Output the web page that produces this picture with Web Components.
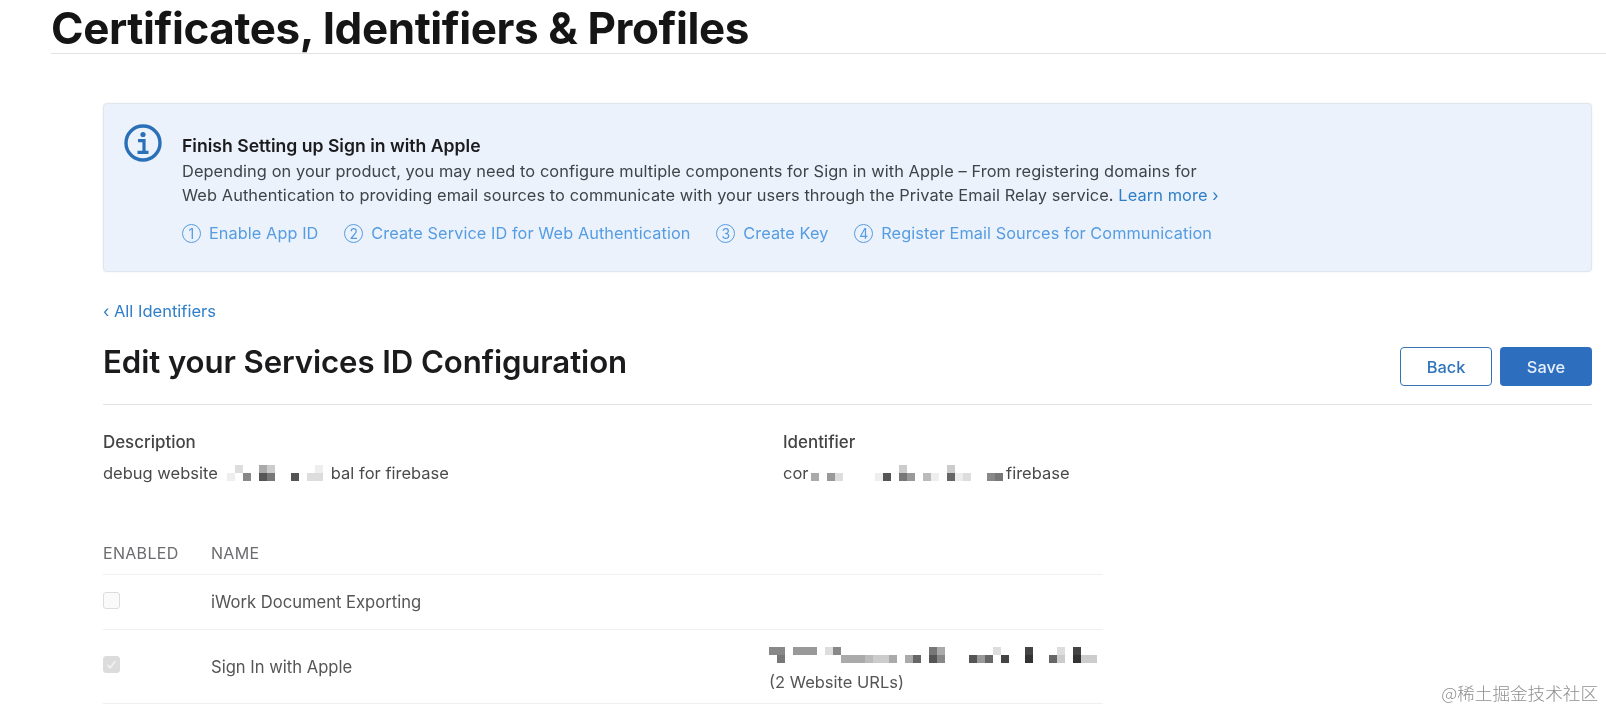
<!DOCTYPE html>
<html lang="en">
<head>
<meta charset="utf-8">
<title>Certificates, Identifiers &amp; Profiles</title>
<style>
  html, body { margin: 0; height: 712px; overflow: hidden; background: #fff; }
  body { font-family: Inter, "Liberation Sans", sans-serif; color: #333; position: relative; }
</style>
</head>
<body>
<page-title>Certificates, Identifiers &amp; Profiles</page-title>

<page-main>
  <info-banner heading="Finish Setting up Sign in with Apple">
    Depending on your product, you may need to configure multiple components for Sign in with Apple – From registering domains for<br>
    Web Authentication to providing email sources to communicate with your users through the Private Email Relay service. <a slot="more">Learn more ›</a>
    <step-link slot="steps" num="1">Enable App ID</step-link>
    <step-link slot="steps" num="2">Create Service ID for Web Authentication</step-link>
    <step-link slot="steps" num="3">Create Key</step-link>
    <step-link slot="steps" num="4">Register Email Sources for Communication</step-link>
  </info-banner>

  <back-link>All Identifiers</back-link>

  <section-head heading="Edit your Services ID Configuration">
    <app-button kind="outline">Back</app-button>
    <app-button kind="solid">Save</app-button>
  </section-head>

  <detail-grid>
    <detail-field label="Description">
      <span>debug website</span><mosaic-blur style="margin:0 8px 0 9px" cols="12"
        row0="1:ddd 4:aaa 5:ccc 11:eee"
        row1="0:eee 2:888 4:555 5:777 8:555 10:ddd 11:ddd"></mosaic-blur><span>bal for firebase</span>
    </detail-field>
    <detail-field label="Identifier">
      <span>cor</span><mosaic-blur style="margin:0 3.5px 0 2px" cols="24"
        row0="11:ccc 17:ccc"
        row1="0:aaa 2:999 3:ddd 8:eee 9:555 11:777 12:999 14:bbb 15:eee 17:666 18:eee 19:ddd 22:888 23:777"></mosaic-blur><span>firebase</span>
    </detail-field>
  </detail-grid>

  <service-table>
    <service-row name="iWork Document Exporting"></service-row>
    <service-row name="Sign In with Apple" checked tall>
      <mosaic-blur cols="41"
        row0="0:888 1:888 3:999 4:999 5:999 7:ddd 8:888 20:777 21:aaa 28:ddd 32:444 36:ddd 38:444"
        row1="1:777 9:aaa 10:aaa 11:aaa 12:bbb 13:ccc 14:ccc 15:aaa 17:aaa 18:666 20:555 21:888 25:555 26:999 27:666 29:444 32:333 35:666 36:ccc 38:333 39:ccc 40:ccc"></mosaic-blur>
      <div class="urls" style="margin-top:8px">(2 Website URLs)</div>
    </service-row>
  </service-table>
</page-main>

<water-mark>@稀土掘金技术社区</water-mark>

<script>
  // Small helper so each component only has to say what is in its shadow root
  class ShadowElement extends HTMLElement {
    constructor(html) {
      super();
      this.attachShadow({ mode: 'open' });
      this.shadowRoot.innerHTML = html;
    }
  }

  class PageTitle extends ShadowElement {
    constructor() {
      super(`
        <style>
          :host { display: block; margin-left: 51px; height: 53px; border-bottom: 1px solid #e3e3e3; filter: blur(.35px); }
          h1 { margin: 0; padding-top: 4px; font: 700 44px/49px Inter, "Liberation Sans", sans-serif; color: #151515; letter-spacing: -.42px; }
        </style>
        <h1><slot></slot></h1>`);
    }
  }
  customElements.define('page-title', PageTitle);

  class PageMain extends ShadowElement {
    constructor() {
      super(`
        <style>
          :host { display: block; margin: 49px 14px 0 103px; filter: blur(.35px); }
        </style>
        <slot></slot>`);
    }
  }
  customElements.define('page-main', PageMain);

  class InfoBanner extends ShadowElement {
    constructor() {
      super(`
        <style>
          :host {
            display: flex; box-sizing: border-box; height: 169px; padding: 20px 0 0 20px; gap: 20px;
            background: #ebf2fb; border: 1px solid #dfe6ee; border-radius: 4px;
            box-shadow: 0 0 2px rgba(0,0,0,.08);
          }
          svg { width: 38px; height: 38px; flex: none; }
          .text { font-size: 16.38px; line-height: 23.5px; color: #3f4448; padding-top: 10px; letter-spacing: .08px; white-space: nowrap; }
          h3 { margin: 0 0 2px; font-size: 17.6px; font-weight: 600; line-height: 24px; color: #1b1b1d; letter-spacing: 0; }
          ::slotted(a) { color: #2f7ec8; }
          .steps { display: flex; gap: 25.8px; margin-top: 15px; }
        </style>
        <svg viewBox="0 0 38 38" fill="none" stroke="#2a70b9">
          <circle cx="19" cy="19" r="17" stroke-width="3.4"/>
          <circle cx="19" cy="10.5" r="2.6" fill="#2a70b9" stroke="none"/>
          <path d="M14 16.6h6v11.4M13.5 28.4h11" stroke-width="3.2"/>
        </svg>
        <div class="text">
          <h3></h3>
          <slot></slot><slot name="more"></slot>
          <div class="steps"><slot name="steps"></slot></div>
        </div>`);
      this.shadowRoot.querySelector('h3').textContent = this.getAttribute('heading');
    }
  }
  customElements.define('info-banner', InfoBanner);

  class StepLink extends ShadowElement {
    constructor() {
      super(`
        <style>
          :host { display: inline-flex; align-items: center; gap: 8px; color: #569ce2; font-size: 16.3px; line-height: 23px; letter-spacing: .08px; }
          b {
            box-sizing: border-box; width: 19px; height: 19px; border: 1.3px solid #569ce2; border-radius: 50%;
            display: flex; align-items: center; justify-content: center;
            font-size: 14px; font-weight: 400; line-height: 1;
          }
        </style>
        <b></b><span><slot></slot></span>`);
      this.shadowRoot.querySelector('b').textContent = this.getAttribute('num');
    }
  }
  customElements.define('step-link', StepLink);

  class BackLink extends ShadowElement {
    constructor() {
      super(`
        <style>
          :host { display: block; margin-top: 27px; color: #2f7ec8; font-size: 16.5px; line-height: 24px; }
        </style>
        ‹ <slot></slot>`);
    }
  }
  customElements.define('back-link', BackLink);

  class SectionHead extends ShadowElement {
    constructor() {
      super(`
        <style>
          :host {
            display: flex; justify-content: space-between; align-items: flex-start; box-sizing: border-box;
            height: 70px; margin-top: 12px; padding-top: 9px; border-bottom: 1px solid #e3e3e3;
          }
          h2 { margin: 0; font-size: 31.2px; font-weight: 600; line-height: 36px; color: #1b1b1d; letter-spacing: -.1px; }
          .actions { display: flex; gap: 8px; margin-top: 3px; }
        </style>
        <h2></h2>
        <div class="actions"><slot></slot></div>`);
      this.shadowRoot.querySelector('h2').textContent = this.getAttribute('heading');
    }
  }
  customElements.define('section-head', SectionHead);

  class AppButton extends ShadowElement {
    constructor() {
      super(`
        <style>
          :host {
            display: flex; align-items: center; justify-content: center; box-sizing: border-box;
            width: 92px; height: 39px; border-radius: 4px; font-size: 16.4px; font-weight: 500;
          }
          :host([kind=outline]) { background: #fff; color: #2f74bb; border: 1.5px solid #3574b0; }
          :host([kind=solid]) { background: #2d6ebf; color: #e6effa; }
        </style>
        <slot></slot>`);
    }
  }
  customElements.define('app-button', AppButton);

  class DetailGrid extends ShadowElement {
    constructor() {
      super(`
        <style>
          :host { display: grid; grid-template-columns: 680px 1fr; margin-top: 25px; }
        </style>
        <slot></slot>`);
    }
  }
  customElements.define('detail-grid', DetailGrid);

  class DetailField extends ShadowElement {
    constructor() {
      super(`
        <style>
          :host { display: block; font-size: 16.5px; color: #4a4a4c; }
          .label { font-size: 16.9px; font-weight: 500; line-height: 24px; color: #444; margin-bottom: 7px; }
          .value { display: flex; align-items: center; height: 24px; white-space: nowrap; }
        </style>
        <div class="label"></div>
        <div class="value"><slot></slot></div>`);
      this.shadowRoot.querySelector('.label').textContent = this.getAttribute('label');
    }
  }
  customElements.define('detail-field', DetailField);

  // Pixelated redaction blocks, two rows of 8px cells: "cell:shade cell:shade"
  class MosaicBlur extends ShadowElement {
    constructor() {
      super(`
        <style>
          :host { display: block; line-height: 0; }
          svg { display: block; }
        </style>
        <svg shape-rendering="crispEdges"></svg>`);
      const cols = +this.getAttribute('cols');
      const svg = this.shadowRoot.querySelector('svg');
      svg.setAttribute('width', cols * 8);
      svg.setAttribute('height', 16);
      let rects = '';
      ['row0', 'row1'].forEach((row, y) => {
        (this.getAttribute(row) || '').split(' ').filter(Boolean).forEach(cell => {
          const [x, shade] = cell.split(':');
          rects += `<rect x="${x * 8}" y="${y * 8}" width="8" height="8" fill="#${shade}"/>`;
        });
      });
      svg.innerHTML = rects;
    }
  }
  customElements.define('mosaic-blur', MosaicBlur);

  class ServiceTable extends ShadowElement {
    constructor() {
      super(`
        <style>
          :host { display: block; width: 1000px; margin-top: 56px; color: #555; font-size: 16px; }
          .head { display: grid; grid-template-columns: 108px 1fr; height: 33px; line-height: 24px; color: #6c6c70; letter-spacing: .3px; border-bottom: 1px solid #f0f0f0; }
        </style>
        <div class="head"><span>ENABLED</span><span>NAME</span></div>
        <slot></slot>`);
    }
  }
  customElements.define('service-table', ServiceTable);

  class ServiceRow extends ShadowElement {
    constructor() {
      super(`
        <style>
          :host { display: grid; grid-template-columns: 108px 558px 1fr; align-items: center; box-sizing: border-box; height: 55px; border-bottom: 1px solid #f0f0f0; font-size: 16.6px; color: #555; }
          :host([tall]) { height: 74px; }
          .extra { line-height: 22px; padding-top: 6px; white-space: nowrap; font-size: 16.5px; }
          .box { box-sizing: border-box; width: 17px; height: 17px; border: 1px solid #dcdcdc; border-radius: 3px; background: #fafafa; margin-top: -4px; display: block; }
          :host([checked]) .box { background: #dcdcdc; }
          :host([checked]) .box svg { display: block; }
          .box svg { display: none; }
        </style>
        <span class="box"><svg viewBox="0 0 16 16" width="15" height="15" fill="none" stroke="#f2f2f2" stroke-width="1.8"><path d="M3.5 8.5l3 3 5.5-7"/></svg></span>
        <span class="name"></span>
        <div class="extra"><slot></slot></div>`);
      this.shadowRoot.querySelector('.name').textContent = this.getAttribute('name');
    }
  }
  customElements.define('service-row', ServiceRow);

  class WaterMark extends ShadowElement {
    constructor() {
      super(`
        <style>
          :host { position: absolute; right: 8px; bottom: 7px; font: 300 17.6px/24px "Noto Sans CJK SC", "Noto Sans", sans-serif; color: #8f8f8f; filter: blur(.3px); }
        </style>
        <slot></slot>`);
    }
  }
  customElements.define('water-mark', WaterMark);
</script>
</body>
</html>
